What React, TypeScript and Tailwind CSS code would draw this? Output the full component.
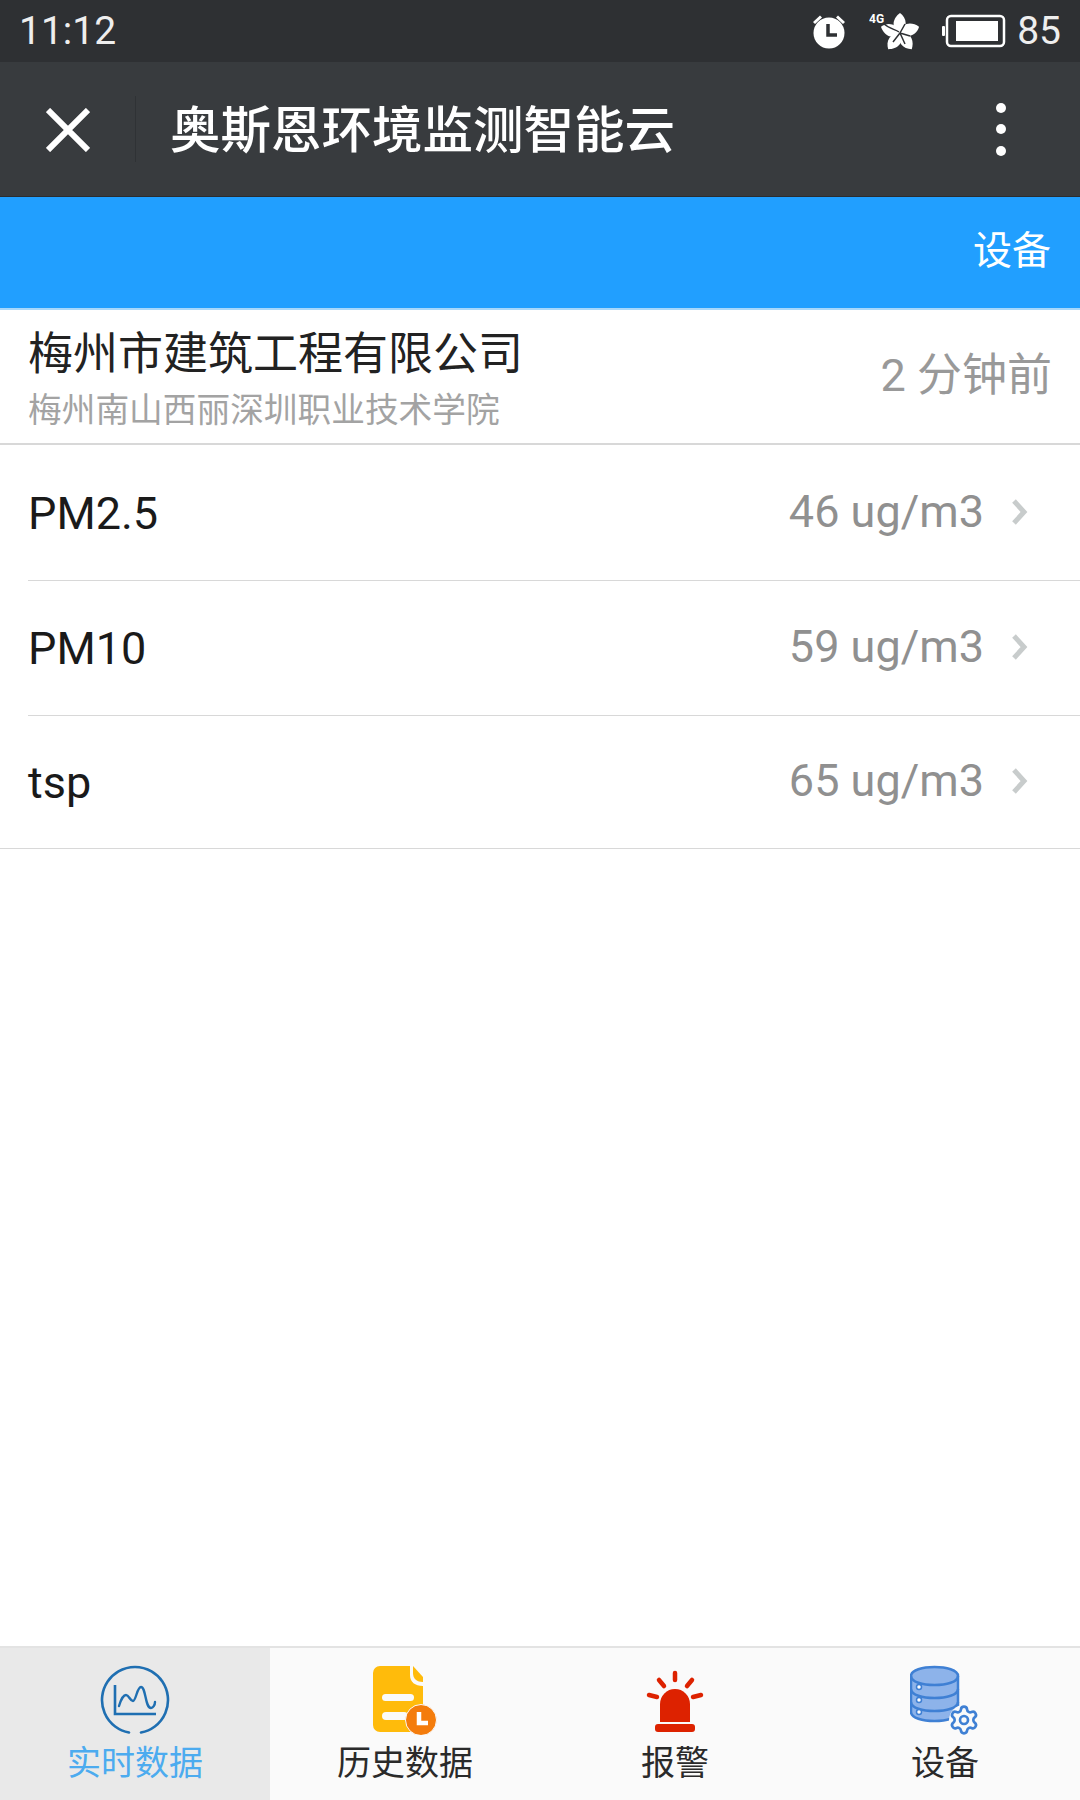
import React from 'react';
import { Settings } from 'lucide-react';

const FONT = 'font-["Roboto","Noto_Sans_CJK_SC",sans-serif]';

const AlarmIcon = () => (
  <svg width="38" height="38" viewBox="0 0 38 38" fill="#fff">
    <circle cx="19" cy="21" r="15.5" />
    <path d="M3 10 L10 3.5 L12 5.5 L5 12 Z M35 10 L28 3.5 L26 5.5 L33 12 Z" />
    <path d="M18 12 V23 H27" fill="none" stroke="#2e3033" strokeWidth="3.5" />
  </svg>
);

const SignalIcon = () => (
  <svg width="50" height="38" viewBox="0 0 50 38" fill="#fff">
    <g transform="translate(31 21)">
      {[0, 72, 144, 216, 288].map((deg) => (
        <path key={deg} transform={`rotate(${deg})`} d="M0 0 C-10 -5 -7 -15 0 -20 C7 -15 8 -6 0 0 Z" />
      ))}
    </g>
    <path d="M14 11 C20 17 26 17 30 20 M31 21 L36 12 M31 21 L41 24 M31 21 L36 32 M31 21 L24 30" fill="none" stroke="#2e3033" strokeWidth="1.5" />
    <text x="0" y="11" fontSize="12" fontWeight="700" fill="#fff" fontFamily="Roboto, sans-serif">4G</text>
  </svg>
);

const BatteryIcon = () => (
  <svg width="64" height="34" viewBox="0 0 64 34">
    <rect x="5" y="2" width="57" height="30" rx="4" fill="none" stroke="#fff" strokeWidth="2.5" />
    <rect x="0" y="12" width="3" height="10" rx="1" fill="#fff" />
    <rect x="14" y="7" width="42" height="20" fill="#fff" />
  </svg>
);

const Chevron = () => (
  <svg width="17" height="28" viewBox="0 0 17 28" fill="none">
    <path d="M3 3 L13 14 L3 25" stroke="#c8cccc" strokeWidth="5" />
  </svg>
);

const RealtimeIcon = () => (
  <svg width="70" height="70" viewBox="0 0 70 70" fill="none" stroke="#1f6fb2">
    <path d="M29 67.5 A33 33 0 1 1 41 67.5" strokeWidth="2.6" strokeLinecap="round" />
    <path d="M15 20 V49 H56" strokeWidth="2.6" />
    <path d="M19 41 C21 34 24 30 26 30 C29 30 30 36 33 36 C36 36 37 22 41 22 C46 22 45 43 51 43 C53 43 55 40 55 37" strokeWidth="2.4" strokeLinecap="round" />
  </svg>
);

const HistoryIcon = () => (
  <svg width="66" height="70" viewBox="0 0 66 70">
    <path d="M8 1 H38 V10 C38 17 43 21 51 21 V67 H8 A7 7 0 0 1 1 60 V8 A7 7 0 0 1 8 1 Z" fill="#ffbb0b" />
    <path d="M41 1 L51 12 V17 C45 17 41 14 41 8 Z" fill="#ffbb0b" />
    <rect x="10" y="29" width="32" height="7" rx="3.5" fill="#fafafa" />
    <rect x="10" y="47" width="26" height="8" rx="4" fill="#fafafa" />
    <circle cx="49" cy="55" r="15.5" fill="#f47c0c" stroke="#fafafa" strokeWidth="1" />
    <path d="M47 47 V58 H56" fill="none" stroke="#fff" strokeWidth="4.5" />
  </svg>
);

const AlarmBellIcon = () => (
  <svg width="60" height="70" viewBox="0 0 60 70" fill="#dd2200">
    <path d="M15 57 V39 A15 15 0 0 1 45 39 V57 Z" />
    <rect x="10" y="59" width="40" height="8" rx="3" />
    <g stroke="#dd2200" strokeWidth="4.5" strokeLinecap="round">
      <path d="M30 8 V15" />
      <path d="M14 15 L19 21" />
      <path d="M47 15 L42 21" />
      <path d="M4 30 L12 32" />
      <path d="M56 30 L48 32" />
    </g>
  </svg>
);

const DeviceIcon = () => (
  <svg width="70" height="70" viewBox="0 0 70 70">
    <path d="M1 11 C1 -1 48 -1 48 11 V47 C48 59 1 59 1 47 Z" fill="#8db3ea" stroke="#3f80d4" strokeWidth="2.5" />
    <path d="M1 11 C1 23 48 23 48 11 M1 24 C1 36 48 36 48 24 M1 37 C1 49 48 49 48 37" fill="none" stroke="#3f80d4" strokeWidth="2.5" />
    <circle cx="9" cy="22" r="2.5" fill="#fff" stroke="#3f80d4" strokeWidth="1.5" />
    <circle cx="9" cy="35" r="2.5" fill="#fff" stroke="#3f80d4" strokeWidth="1.5" />
    <circle cx="9" cy="47" r="2.5" fill="#fff" stroke="#3f80d4" strokeWidth="1.5" />
    <circle cx="54" cy="55" r="15" fill="#fafafa" />
    <Settings x={38} y={39} width={32} height={32} stroke="#3f80d4" strokeWidth={2} fill="#fafafa" />
  </svg>
);

const rows = [
  { name: 'PM2.5', value: '46 ug/m3', h: 'h-[136px]' },
  { name: 'PM10', value: '59 ug/m3', h: 'h-[135px]' },
  { name: 'tsp', value: '65 ug/m3', h: 'h-[133px]' },
];

const tabs = [
  { label: '实时数据', icon: <RealtimeIcon />, active: true },
  { label: '历史数据', icon: <HistoryIcon />, active: false },
  { label: '报警', icon: <AlarmBellIcon />, active: false },
  { label: '设备', icon: <DeviceIcon />, active: false },
];

export default function App() {
  return (
    <div className={`${FONT} w-[1080px] h-[1800px] flex flex-col bg-white overflow-hidden`}>
      {/* status bar */}
      <div className="h-[62px] bg-[#2e3033] flex items-center justify-between pl-[19px] pr-[19px] text-[#eeeeee] text-[39px] leading-none">
        <span>11:12</span>
        <div className="flex items-center">
          <AlarmIcon />
          <div className="ml-[21px]"><SignalIcon /></div>
          <div className="ml-[23px]"><BatteryIcon /></div>
          <span className="ml-[11px]">85</span>
        </div>
      </div>

      {/* title bar */}
      <div className="h-[135px] bg-[#383b3e] flex items-center border-b border-[#2b2d30]">
        <svg width="44" height="44" viewBox="0 0 44 44" className="ml-[46px] mt-[2px]">
          <path d="M2 2 L42 42 M42 2 L2 42" stroke="#fff" strokeWidth="6" />
        </svg>
        <div className="w-px h-[66px] bg-[#2f3235] ml-[45px]" />
        <span className="ml-[34px] mt-[4px] text-[50.5px] leading-none text-white font-medium">奥斯恩环境监测智能云</span>
        <div className="ml-auto mr-[74px] flex flex-col gap-[11.5px]">
          <div className="size-[10px] rounded-full bg-white" />
          <div className="size-[10px] rounded-full bg-white" />
          <div className="size-[10px] rounded-full bg-white" />
        </div>
      </div>

      {/* blue header */}
      <div className="h-[113px] bg-[#219fff] flex items-center justify-end pr-[29px] text-[39px] text-white border-b-2 border-[#a8d8fb]">
        <span className="mb-[2px]">设备</span>
      </div>

      {/* company */}
      <div className="h-[135px] flex items-center justify-between pl-[28px] pr-[28px] pt-[7px] border-b-2 border-[#d8d8d8]">
        <div className="flex flex-col">
          <span className="text-[45px] leading-[54px] text-[#222222]">梅州市建筑工程有限公司</span>
          <span className="mt-[7px] text-[33.7px] leading-[44px] text-[#a3a3a3]">梅州南山西丽深圳职业技术学院</span>
        </div>
        <span className="mb-[9px] text-[45px] text-[#999999]">2 分钟前</span>
      </div>

      {/* data rows */}
      <div>
        {rows.map((row, i) => (
          <div key={row.name} className={`${row.h} flex ${i === rows.length - 1 ? 'border-b border-[#d8d8d8]' : ''}`}>
            <div className={`flex-1 ml-[28px] flex items-center justify-between pr-[52px] ${i === rows.length - 1 ? '' : 'border-b border-[#d8d8d8]'}`}>
              <span className="mt-[2px] text-[45px] text-[#1a1a1a]">{row.name}</span>
              <div className="flex items-center">
                <span className="mb-[2px] text-[45px] text-[#909090]">{row.value}</span>
                <div className="ml-[27px] mb-[2px]"><Chevron /></div>
              </div>
            </div>
          </div>
        ))}
      </div>

      {/* tab bar */}
      <div className="mt-auto h-[154px] grid grid-cols-4 bg-[#fafafa] border-t-2 border-[#e3e3e3]">
        {tabs.map((tab) => (
          <div key={tab.label} className={`flex flex-col items-center pt-[17px] ${tab.active ? 'bg-[#e9e9e9]' : ''}`}>
            <div className="h-[70px] flex items-center justify-center">{tab.icon}</div>
            <span className={`mt-[6px] text-[34px] leading-[44px] ${tab.active ? 'text-[#4cabef]' : 'text-[#2a2a2a]'}`}>{tab.label}</span>
          </div>
        ))}
      </div>
    </div>
  );
}
